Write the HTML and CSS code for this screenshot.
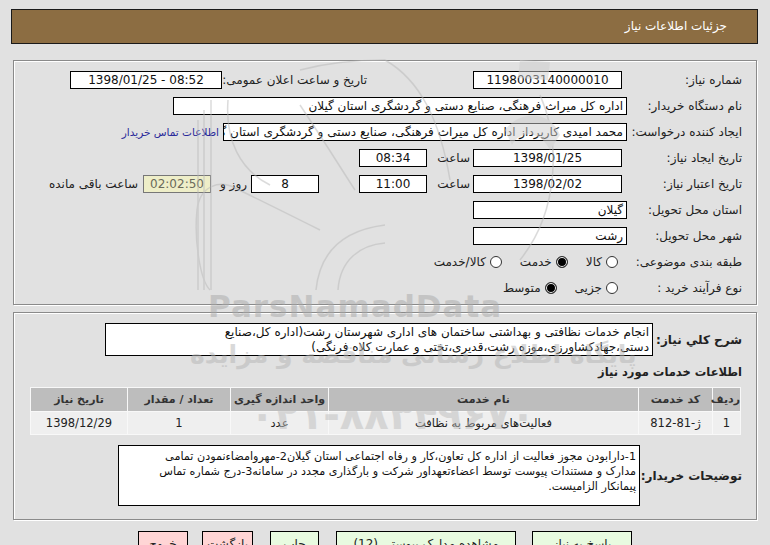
FILE: index.html
```html
<!DOCTYPE html>
<html lang="fa" dir="rtl">
<head>
<meta charset="utf-8">
<title>جزئیات اطلاعات نیاز</title>
<link rel="stylesheet" href="styles.css">
</head>
<body>
<div class="page">
  <div class="titlebar">جزئیات اطلاعات نیاز</div>

  <div class="panel panel-main">
    <div class="row">
      <div class="lbl">شماره نیاز:</div>
      <div class="field w149 ms5">1198003140000010</div>
      <div class="lbl2">تاریخ و ساعت اعلان عمومی:</div>
      <div class="field w152 ltr">1398/01/25 - 08:52</div>
    </div>
    <div class="row">
      <div class="lbl">نام دستگاه خریدار:</div>
      <div class="field w454 start">اداره کل میراث فرهنگی، صنایع دستی و گردشگری استان گیلان</div>
    </div>
    <div class="row">
      <div class="lbl">ایجاد کننده درخواست:</div>
      <div class="field w404 start clip">محمد امیدی کارپرداز اداره کل میراث فرهنگی، صنایع دستی و گردشگری استان گیلان</div>
      <a class="link" href="#">اطلاعات تماس خریدار</a>
    </div>
    <div class="row">
      <div class="lbl">تاریخ ایجاد نیاز:</div>
      <div class="field w149 ms5">1398/01/25</div>
      <div class="txt hour">ساعت</div>
      <div class="field w68">08:34</div>
    </div>
    <div class="row">
      <div class="lbl">تاریخ اعتبار نیاز:</div>
      <div class="field w149 ms5">1398/02/02</div>
      <div class="txt hour">ساعت</div>
      <div class="field w68">11:00</div>
      <div class="field w68 days">8</div>
      <div class="txt dayword">روز و</div>
      <div class="field w68 remain">02:02:50</div>
      <div class="txt remainword">ساعت باقی مانده</div>
    </div>
    <div class="row">
      <div class="lbl">استان محل تحویل:</div>
      <div class="field w154 start">گیلان</div>
    </div>
    <div class="row">
      <div class="lbl">شهر محل تحویل:</div>
      <div class="field w154 start">رشت</div>
    </div>
    <div class="row">
      <div class="lbl">طبقه بندی موضوعی:</div>
      <div class="radios">
        <span class="radio"></span><span class="rtext">کالا</span>
        <span class="radio on"></span><span class="rtext">خدمت</span>
        <span class="radio"></span><span class="rtext">کالا/خدمت</span>
      </div>
    </div>
    <div class="row">
      <div class="lbl">نوع فرآیند خرید :</div>
      <div class="radios">
        <span class="radio"></span><span class="rtext">جزیی</span>
        <span class="radio on"></span><span class="rtext">متوسط</span>
      </div>
    </div>
  </div>

  <div class="panel panel-desc">
    <div class="desc-row">
      <div class="blbl w89">شرح کلي نیاز:</div>
      <div class="box descbox">انجام خدمات نظافتی و بهداشتی ساختمان های اداری شهرستان رشت(اداره کل،صنایع<br>دستی،جهادکشاورزی،موزه رشت،قدیری،تختی و عمارت کلاه فرنگی)</div>
    </div>
    <div class="heading">اطلاعات خدمات مورد نیاز</div>
    <table class="grid">
      <thead>
        <tr>
          <th class="c1">ردیف</th>
          <th class="c2">کد خدمت</th>
          <th class="c3">نام خدمت</th>
          <th class="c4">واحد اندازه گیری</th>
          <th class="c5">تعداد / مقدار</th>
          <th class="c6">تاریخ نیاز</th>
        </tr>
      </thead>
      <tbody>
        <tr>
          <td>1</td>
          <td><bdo dir="ltr">812-81-ژ</bdo></td>
          <td>فعالیت‌های مربوط به نظافت</td>
          <td>عدد</td>
          <td>1</td>
          <td>1398/12/29</td>
        </tr>
      </tbody>
    </table>
    <div class="notes-row">
      <div class="blbl w102">توضیحات خریدار:</div>
      <div class="box notesbox">1-دارابودن مجوز فعالیت از اداره کل تعاون،کار و رفاه اجتماعی استان گیلان2-مهروامضاءنمودن تمامی<br>مدارک و مستندات پیوست توسط اعضاءتعهداور شرکت و بارگذاری مجدد در سامانه3-درج شماره تماس<br>پیمانکار الزامیست.</div>
    </div>
  </div>

  <div class="buttons">
    <div class="btn green b100">پاسخ به نیاز</div>
    <div class="btn green b180">مشاهده مدارک پیوستی (12)</div>
    <div class="btn green b49">چاپ</div>
    <div class="btn pink b51">بازگشت</div>
    <div class="btn pink b50">خروج</div>
  </div>

  <div class="watermark" aria-hidden="true">
    <svg class="wm-logo" width="770" height="545" viewBox="0 0 770 545">
      <g fill="none" stroke="#b9b9b9" stroke-width="1.5">
        <path d="M198 290 V120 M204 290 V110 M211 290 V100"/>
        <path d="M320 230 C300 220 260 200 235 188 C220 180 200 185 197 210 C194 240 200 280 210 290"/>
        <path d="M228 100 C225 140 240 170 270 185"/>
        <path d="M300 105 C330 150 345 175 355 190"/>
        <path d="M316 290 C320 250 345 230 385 225"/>
        <path d="M338 290 C340 260 360 245 385 243"/>
        <path d="M385 60 C420 80 440 120 450 180"/>
        <path d="M300 70 C330 62 360 60 385 60"/>
        <path d="M540 95 C560 140 560 210 520 260"/>
      </g>
      <path d="M520 60 L550 62 L548 80 L518 78 Z M505 130 C520 110 550 110 560 135 L550 150 C540 130 520 130 512 145 Z" fill="#cfcfcf"/>
    </svg>
    <div class="wm-brand">ParsNamadData</div>
    <div class="wm-sub">پایگاه اطلاع رسانی مناقصه و مزایده</div>
    <div class="wm-phone">۰۲۱-۸۸۳۴۹۶۷۰</div>
  </div>
</div>
</body>
</html>
```

FILE: styles.css
```css
* { box-sizing: border-box; }

html, body {
  margin: 0;
  padding: 0;
  background: #e1e1e1;
}

body {
  font-family: "DejaVu Sans", "Noto Sans", sans-serif;
  font-size: 12px;
  color: #222;
}

.page {
  position: relative;
  width: 770px;
  height: 545px;
  overflow: hidden;
  padding-top: 9px;
}

.titlebar {
  margin: 0 12px 0 11px;
  height: 35px;
  background: #8c6d42;
  border: 1px solid #1a1a1a;
  color: #fff;
  font-size: 12px;
  line-height: 33px;
  padding-right: 30px;
}

.panel {
  margin: 0 13px;
  border: 1px solid #8a8a8a;
  box-shadow: inset 1px 1px 0 #ffffff, 1px 1px 0 #ffffff;
  background: #e1e1e1;
}

.panel-main {
  margin-top: 16px;
  height: 245px;
  padding: 6px 14px 0 0;
}

.row {
  display: flex;
  align-items: center;
  height: 26px;
}

.lbl {
  width: 115px;
  flex: none;
  white-space: nowrap;
}

.lbl2 {
  width: 145px;
  margin-right: 106px;
  flex: none;
  white-space: nowrap;
}

.field {
  flex: none;
  height: 18px;
  border: 1px solid #000;
  background: #fff;
  line-height: 16px;
  text-align: center;
  padding: 0 3px;
  white-space: nowrap;
  color: #111;
}

.field.start { text-align: right; }
.field.clip { overflow: hidden; }
.field.ltr { direction: ltr; }

.ms5 { margin-right: 5px; }
.w149 { width: 149px; }
.w152 { width: 152px; }
.w154 { width: 154px; }
.w404 { width: 404px; }
.w454 { width: 454px; }
.w68 { width: 68px; }

.link {
  margin-right: 4px;
  color: #2a2a9a;
  text-decoration: none;
  white-space: nowrap;
  font-size: 10.5px;
}

.txt { white-space: nowrap; flex: none; }
.hour { width: 36px; margin-right: 3px; }
.hour + .field { margin-right: 7px; }
.days { margin-right: 40px; }
.dayword { margin-right: 4px; width: 32px; }
.remain {
  margin-right: 4px;
  background: #eeeec8;
  color: #6a6a5a;
  border-color: #777;
}
.remainword { margin-right: 5px; }

.radios {
  display: flex;
  align-items: center;
  margin-right: 9px;
}

.radio {
  width: 12px;
  height: 12px;
  border: 1px solid #333;
  border-radius: 50%;
  background: #fff;
  margin-left: 4px;
  flex: none;
}

.radio.on {
  background: #000;
  box-shadow: inset 0 0 0 1px #fff;
}

.rtext {
  margin-left: 18px;
  white-space: nowrap;
}

.panel-desc {
  margin-top: 7px;
  height: 208px;
  padding: 10px 14px 0 0;
}

.desc-row, .notes-row {
  display: flex;
  align-items: center;
}

.blbl {
  flex: none;
  font-weight: bold;
  font-size: 12px;
  color: #222;
  white-space: nowrap;
}

.w89 { width: 89px; }
.w102 { width: 102px; }

.box {
  border: 1px solid #000;
  background: #fff;
  line-height: 15px;
  padding: 1px 3px;
  color: #111;
  white-space: nowrap;
  overflow: hidden;
}

.descbox {
  width: 548px;
  height: 33px;
  font-size: 12px;
}

.heading {
  margin-top: 8px;
  height: 16px;
  line-height: 16px;
  font-weight: bold;
  font-size: 11.5px;
  color: #222;
}

.grid {
  margin-top: 7px;
  width: 710px;
  border-collapse: separate;
  border-spacing: 1px;
  background: #f8f8f8;
  table-layout: fixed;
  margin-right: 1px;
}

.grid th {
  background: #bdbdbd;
  height: 23px;
  font-weight: bold;
  font-size: 11px;
  color: #333;
  text-align: center;
  white-space: nowrap;
  padding: 0;
}

.grid td {
  background: #efefef;
  height: 22px;
  text-align: center;
  white-space: nowrap;
  padding: 0;
  font-size: 11.5px;
}

.c1 { width: 27px; }
.c2 { width: 73px; }
.c3 { width: 309px; }
.c4 { width: 97px; }
.c5 { width: 102px; }
.c6 { width: 96px; }

.notes-row {
  margin-top: 10px;
}

.notesbox {
  width: 522px;
  height: 61px;
  padding-top: 3px;
  font-size: 11.2px;
}

.buttons {
  display: flex;
  margin-top: 11px;
  padding-right: 138px;
}

.btn {
  flex: none;
  height: 24px;
  border: 1px solid #000;
  font-size: 12px;
  line-height: 24px;
  text-align: center;
  white-space: nowrap;
  color: #222;
}

.btn.green { background: #e8fbe0; }
.btn.pink { background: #ffd5d5; }

.b100 { width: 100px; }
.b180 { width: 180px; margin-right: 16px; }
.b49 { width: 49px; margin-right: 17px; }
.b51 { width: 51px; margin-right: 17px; }
.b50 { width: 50px; margin-right: 14px; }

.watermark {
  position: absolute;
  inset: 0;
  pointer-events: none;
  opacity: 0.5;
}

.wm-logo {
  position: absolute;
  top: 0;
  left: 0;
}

.wm-brand {
  position: absolute;
  top: 288px;
  left: 208px;
  direction: ltr;
  font-family: "DejaVu Sans", sans-serif;
  font-weight: bold;
  font-size: 31px;
  letter-spacing: 1px;
  color: #a9a9a9;
}

.wm-sub {
  position: absolute;
  top: 340px;
  left: 190px;
  font-size: 25px;
  font-weight: bold;
  color: #b5b5b5;
  white-space: nowrap;
}

.wm-phone {
  position: absolute;
  top: 392px;
  left: 250px;
  direction: ltr;
  font-size: 40px;
  font-weight: bold;
  color: #bdbdbd;
  white-space: nowrap;
}
```
